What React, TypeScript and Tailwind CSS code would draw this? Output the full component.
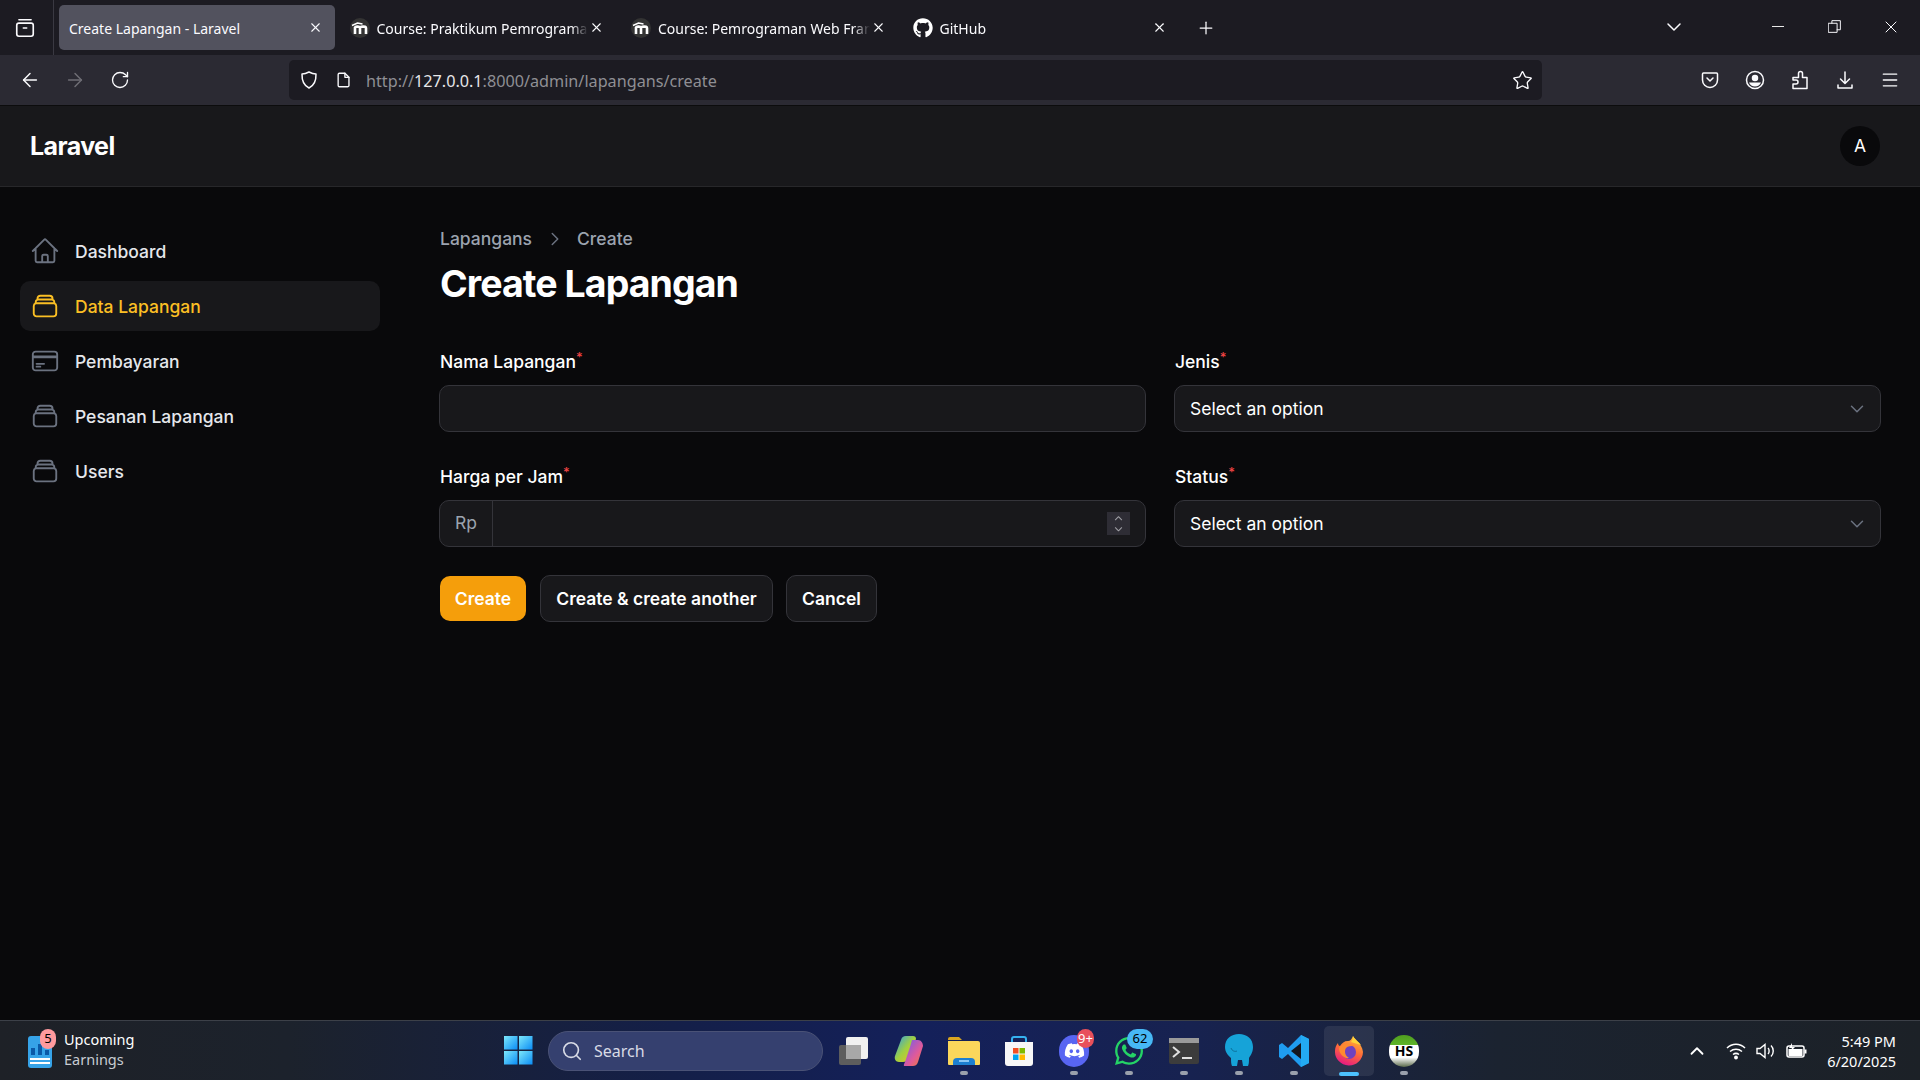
import React from "react";
import { HiOutlineHome, HiOutlineRectangleStack, HiOutlineCreditCard } from "react-icons/hi2";
import { FaGithub, FaDiscord, FaWhatsapp } from "react-icons/fa";
import { ChevronDown, ChevronUp, ChevronRight, X, Plus, Search, Star, ArrowLeft, ArrowRight, RotateCw, Menu } from "lucide-react";

const Svg = ({ size = 20, children, className = "" }: { size?: number; children: React.ReactNode; className?: string }) => (
  <svg width={size} height={size} viewBox="0 0 20 20" fill="none" stroke="currentColor" strokeWidth="1.5" strokeLinecap="round" strokeLinejoin="round" className={className}>
    {children}
  </svg>
);

const Moodle = () => (
  <svg width="20" height="20" viewBox="0 0 20 20" className="shrink-0">
    <circle cx="10" cy="10" r="10" fill="#333" />
    <path d="M2 7.500l5.500-2.500 5 1" fill="none" stroke="#fff" strokeWidth="1.400" />
    <path d="M5 16V9M10 16V10c0-1.800 6-2.300 6 0v6M5 10c0-1.800 5-2.300 5 0" fill="none" stroke="#fff" strokeWidth="2.600" />
  </svg>
);

function Tab({ title, icon, active }: { title: string; icon?: React.ReactNode; active?: boolean }) {
  return (
    <div className="h-[55px] w-[281.5px] shrink-0 px-[2px] py-[5px]">
      <div className={`flex h-[45px] items-center rounded-[5px] pl-[10px] ${active ? "mr-[2px] bg-[#52525e] pr-[12px]" : "pr-[14px]"}`}>
        {icon && <span className="-ml-[1px] mr-[7px] flex w-5 shrink-0 justify-center pt-[1px]">{icon}</span>}
        <span className={`min-w-0 flex-1 overflow-hidden whitespace-nowrap pt-[2px] text-[14px] text-[#fbfbfe] [font-family:'Noto_Sans',sans-serif] ${active ? "" : "[mask-image:linear-gradient(90deg,#000_92%,transparent)]"}`}>{title}</span>
        <X size={15} strokeWidth={1.7} className="ml-[1px] shrink-0 text-[#fbfbfe]" />
      </div>
    </div>
  );
}

function TabBar() {
  return (
    <div className="flex h-[55px] shrink-0 items-start bg-[#1c1b22]">
      <div className="flex h-[55px] w-[54px] shrink-0 items-center justify-center border-r border-[#3a3942] pr-[4px]">
        <Svg size={22} className="text-[#fbfbfe]">
          <path d="M4.500 2.500h11" />
          <rect x="2.500" y="5.500" width="15" height="12" rx="2" />
          <path d="M8.500 10h3" />
        </Svg>
      </div>
      <div className="w-[3px] shrink-0" />
      <Tab title="Create Lapangan - Laravel" active />
      <Tab title="Course: Praktikum Pemrograman" icon={<Moodle />} />
      <Tab title="Course: Pemrograman Web Framework" icon={<Moodle />} />
      <Tab title="GitHub" icon={<FaGithub size={20} className="text-white" />} />
      <div className="ml-[4px] flex h-[55px] w-[38px] shrink-0 items-center justify-center pt-[1px]">
        <Plus size={20} strokeWidth={1.5} className="text-[#fbfbfe]" />
      </div>
      <div className="flex h-[55px] flex-1 items-center justify-end pb-[2px] text-[#fbfbfe]">
        <ChevronDown size={24} strokeWidth={1.5} />
        <div className="w-[86px]" />
        <div className="h-px w-3 bg-[#e8e8e8]" />
        <div className="w-[44px]" />
        <Svg size={13}>
          <rect x="1" y="5" width="13" height="14" />
          <path d="M6 5V1h13v14h-5" />
        </Svg>
        <div className="w-[40px]" />
        <X size={20} strokeWidth={1.2} />
        <div className="w-[19px]" />
      </div>
    </div>
  );
}

function NavBar() {
  return (
    <div className="flex h-[51px] shrink-0 items-center border-b border-[#0c0c0d] bg-[#2b2a33] text-[#fbfbfe]">
      <div className="flex w-[289px] shrink-0 items-center pl-[19px]">
        <ArrowLeft size={22} strokeWidth={1.6} />
        <ArrowRight size={22} strokeWidth={1.6} className="ml-[23px] text-[#6f6e75]" />
        <RotateCw size={20} strokeWidth={1.6} className="ml-[24px]" />
      </div>
      <div className="flex h-10 w-[1253px] shrink-0 items-center rounded-[5px] bg-[#1c1b22] pl-[10px]">
        <Svg size={20}>
          <path d="M10 2c2.500 1.300 4.500 2 7 2 .2 6.500-1.800 11.500-7 14C4.800 15.500 2.800 10.500 3 4c2.500 0 4.500-.7 7-2z" />
        </Svg>
        <Svg size={18} className="ml-[16px]">
          <path d="M5 2.500h6l4.500 4.500v9a1.500 1.500 0 0 1-1.500 1.500H5A1.500 1.500 0 0 1 3.500 16V4A1.500 1.500 0 0 1 5 2.500z" />
          <path d="M11 2.500V7h4.500" />
        </Svg>
        <span className="ml-[13px] flex-1 whitespace-nowrap pt-[3px] text-[16.200px] text-[#8f8f94] [font-family:'Noto_Sans',sans-serif]">
          http://<span className="text-[#e6e6e8]">127.0.0.1</span>:8000/admin/lapangans/create
        </span>
        <Star size={21} strokeWidth={1.5} className="mr-[9px]" />
      </div>
      <div className="flex flex-1 items-center justify-end pr-[20px] gap-[25px]">
        <Svg size={20}>
          <path d="M3.500 3h13a1 1 0 0 1 1 1v6a7.500 7.500 0 0 1-15 0V4a1 1 0 0 1 1-1z" />
          <path d="M7 8l3 3 3-3" />
        </Svg>
        <Svg size={20}>
          <circle cx="10" cy="10" r="8.500" />
          <circle cx="10" cy="8" r="2.500" fill="currentColor" />
          <path d="M4 12.500h12a6.500 6.500 0 0 1-12 0z" fill="currentColor" stroke="none" />
        </Svg>
        <Svg size={20}>
          <path d="M3 18.500V14h3a2 2 0 0 0 0-4H3V7.500h5.500V3.500a2 2 0 0 1 4 0v4H17v11z" />
        </Svg>
        <Svg size={20}>
          <path d="M10 2v11M5.500 9l4.500 4.500L14.500 9" />
          <path d="M3 15v3h14v-3" />
        </Svg>
        <Menu size={20} strokeWidth={1.6} />
      </div>
    </div>
  );
}

const items = [
  { label: "Dashboard", Icon: HiOutlineHome },
  { label: "Data Lapangan", Icon: HiOutlineRectangleStack, active: true },
  { label: "Pembayaran", Icon: HiOutlineCreditCard },
  { label: "Pesanan Lapangan", Icon: HiOutlineRectangleStack },
  { label: "Users", Icon: HiOutlineRectangleStack },
];

function Sidebar() {
  return (
    <aside className="flex w-[400px] shrink-0 flex-col gap-[5px] pl-[20px] pr-[20px] pt-[39px]">
      {items.map(({ label, Icon, active }) => (
        <div key={label} className={`flex h-[50px] items-center gap-[15px] rounded-[10px] px-[10px] ${active ? "bg-[#18181b]" : ""}`}>
          <Icon size={30} className={active ? "text-[#fbbf24]" : "text-[#6b7280]"} />
          <span className={`text-[17.500px] font-medium leading-[25px] ${active ? "text-[#fbbf24]" : "text-[#e5e7eb]"}`}>{label}</span>
        </div>
      ))}
    </aside>
  );
}

const Label = ({ children }: { children: React.ReactNode }) => (
  <div className="mb-[11px] h-[25px] pl-[1px] text-[17.500px] font-medium leading-[25px] text-white">
    {children}
    <sup className="text-[13px] font-medium text-[#ef4444]">*</sup>
  </div>
);

const fieldBox = "h-[47px] rounded-[10px] border border-[#34343a] bg-[#18181b]";

const SelectBox = () => (
  <div className={`${fieldBox} flex items-center justify-between pl-[15px] pr-[12px]`}>
    <span className="text-[17.500px] leading-[25px] text-white">Select an option</span>
    <ChevronDown size={22} strokeWidth={1.6} className="text-[#6b7280]" />
  </div>
);

function Form() {
  return (
    <main className="min-w-0 flex-1 pl-[39px] pr-[39px] pt-[39px]">
      <div className="flex h-[25px] items-center pl-[1px] text-[17.500px] font-medium leading-[25px] text-[#9ca3af]">
        <span>Lapangans</span>
        <ChevronRight size={22} strokeWidth={1.6} className="ml-[12px] mr-[11px] text-[#6b7280]" />
        <span>Create</span>
      </div>
      <h1 className="mt-[10px] pl-[1px] text-[37.500px] font-bold leading-[45px] tracking-[-0.94px] text-white">Create Lapangan</h1>
      <div className="mt-[43px] grid grid-cols-2 gap-x-[28px] gap-y-[32px]">
        <div>
          <Label>Nama Lapangan</Label>
          <div className={fieldBox} />
        </div>
        <div>
          <Label>Jenis</Label>
          <SelectBox />
        </div>
        <div>
          <Label>Harga per Jam</Label>
          <div className={`${fieldBox} flex items-center`}>
            <div className="flex h-full w-[53px] items-center justify-center border-r border-[#34343a] text-[17.500px] text-[#9ca3af]">Rp</div>
            <div className="flex-1" />
            <div className="mr-[15px] flex h-[23px] w-[23px] flex-col items-center justify-center bg-[#2e2d35] text-[#a0a0a6]">
              <ChevronUp size={13} strokeWidth={2} className="-mb-[1px]" />
              <ChevronDown size={13} strokeWidth={2} className="-mt-[1px]" />
            </div>
          </div>
        </div>
        <div>
          <Label>Status</Label>
          <SelectBox />
        </div>
      </div>
      <div className="mt-[28px] flex items-center pl-[1px]">
        <button className="h-[45px] w-[86px] rounded-[10px] bg-[#f59e0b] pt-[2px] text-[17.500px] font-semibold text-white">Create</button>
        <button className="ml-[14px] h-[47px] w-[233px] rounded-[10px] border border-[#34343a] bg-[#18181b] pt-[2px] text-[17.500px] font-semibold text-white">Create &amp; create another</button>
        <button className="ml-[13px] h-[47px] w-[91px] rounded-[10px] border border-[#34343a] bg-[#18181b] pt-[2px] text-[17.500px] font-semibold text-white">Cancel</button>
      </div>
    </main>
  );
}

const Pin = ({ on, children, glow }: { on?: boolean; children: React.ReactNode; glow?: boolean }) => (
  <div className={`relative flex h-[50px] w-[50px] shrink-0 items-center justify-center rounded-[5px] ${glow ? "bg-[#ffffff14]" : ""}`}>
    {children}
    {on && <span className="absolute bottom-[1px] left-1/2 h-[4px] w-[8px] -translate-x-1/2 rounded-full bg-[#9aa0ac]" />}
    {glow && <span className="absolute bottom-0 left-1/2 h-[4px] w-[20px] -translate-x-1/2 rounded-full bg-[#4cc2ff]" />}
  </div>
);

const Badge = ({ children, className }: { children: React.ReactNode; className: string }) => (
  <span className={`absolute flex items-center justify-center rounded-full text-[13px] leading-none ${className}`}>{children}</span>
);

function Taskbar() {
  return (
    <footer className="flex h-[60px] shrink-0 items-center border-t border-[#3c4048] bg-[linear-gradient(90deg,#1e2127_0%,#1c222c_15%,#141f48_35%,#14205a_48%,#172250_62%,#1b2330_78%,#1c2127_100%)] [font-family:'Noto_Sans',sans-serif]">
      <div className="flex w-[492px] shrink-0 items-center pl-[28px]">
        <div className="relative h-[30px] w-[24px] shrink-0">
          <svg width="24" height="32" viewBox="0 0 24 32">
            <rect x="0" y="0" width="24" height="32" rx="3" fill="#36a3e8" />
            <rect x="3" y="12" width="4" height="7" fill="#0b5aa8" />
            <rect x="10" y="8" width="4" height="11" fill="#0b5aa8" />
            <rect x="17" y="14" width="4" height="5" fill="#0b5aa8" />
            <rect x="2" y="22" width="20" height="2" fill="#fff" />
            <rect x="2" y="26" width="20" height="2" fill="#fff" />
          </svg>
          <Badge className="left-[12px] -top-[7px] h-[20px] w-[16px] bg-[#ff9a9e] text-black">5</Badge>
        </div>
        <div className="mb-[4px] ml-[12px] flex flex-col text-[14.500px] leading-[20px]">
          <span className="text-white">Upcoming</span>
          <span className="text-[#c8ccd2]">Earnings</span>
        </div>
      </div>
      <div className="flex h-[50px] w-[52px] shrink-0 items-center justify-center">
        <svg width="29" height="29" viewBox="0 0 30 30">
          <defs>
            <linearGradient id="win" x1="0" y1="0" x2="1" y2="1">
              <stop offset="0" stopColor="#7de8fb" />
              <stop offset="1" stopColor="#0a8cf5" />
            </linearGradient>
          </defs>
          <rect x="0" y="0" width="14" height="14" fill="url(#win)" />
          <rect x="15.500" y="0" width="14" height="14" fill="url(#win)" />
          <rect x="0" y="15.500" width="14" height="14" fill="url(#win)" />
          <rect x="15.500" y="15.500" width="14" height="14" fill="url(#win)" />
        </svg>
      </div>
      <div className="ml-[4px] flex h-10 w-[275px] shrink-0 items-center rounded-full border border-[#4a5276] bg-[#35406f] pl-[12px] text-[#d8dbe6]">
        <Search size={22} strokeWidth={1.8} />
        <span className="ml-[11px] text-[16px]">Search</span>
      </div>
      <div className="ml-[6px] flex items-center gap-[5px]">
        <Pin>
          <svg width="30" height="30" viewBox="0 0 30 30" className="-ml-[2px]">
            <rect x="1" y="9" width="22" height="20" rx="2" fill="#5d5d5d" />
            <rect x="8" y="1" width="22" height="22" rx="2" fill="#f0f0f0" />
            <rect x="8" y="9" width="15" height="14" fill="#a8a8a8" />
          </svg>
        </Pin>
        <Pin>
          <svg width="30" height="32" viewBox="0 0 30 32">
            <defs>
              <linearGradient id="cp1" x1="0" y1="0" x2="1" y2="1">
                <stop offset="0" stopColor="#2a9cf0" />
                <stop offset="0.5" stopColor="#a0d040" />
                <stop offset="1" stopColor="#f0c020" />
              </linearGradient>
              <linearGradient id="cp2" x1="0" y1="0" x2="1" y2="1">
                <stop offset="0" stopColor="#6a5cf0" />
                <stop offset="0.6" stopColor="#e05a9a" />
                <stop offset="1" stopColor="#f08030" />
              </linearGradient>
            </defs>
            <path d="M12 1h7c2 0 3 1 3 3l-8 20c-1 2-2 3-5 3H5c-3 0-5-3-4-6L7 5c1-3 2-4 5-4z" fill="url(#cp1)" />
            <path d="M18 5h6c3 0 5 3 5 6l-5 16c-1 3-3 4-5 4h-8c-2 0-1-2 0-4l5-15z" fill="url(#cp2)" />
          </svg>
        </Pin>
        <Pin on>
          <svg width="32" height="30" viewBox="0 0 32 30">
            <path d="M0 3a2 2 0 0 1 2-2h9l3 3h-14z" fill="#d9a520" />
            <path d="M0 5h30a2 2 0 0 1 2 2v21a1 1 0 0 1-1 1H1a1 1 0 0 1-1-1z" fill="#fbd75b" />
            <path d="M5 26a4 4 0 0 1 4-4h14a4 4 0 0 1 4 4v3H5z" fill="#1d7fd1" />
            <rect x="11" y="24" width="10" height="2" fill="#8cc8f5" />
          </svg>
        </Pin>
        <Pin>
          <svg width="30" height="32" viewBox="0 0 30 32">
            <path d="M8 8V4a2 2 0 0 1 2-2h10a2 2 0 0 1 2 2v4" fill="none" stroke="#35b1f0" strokeWidth="2" />
            <path d="M1 7h28v21a3 3 0 0 1-3 3H4a3 3 0 0 1-3-3z" fill="#f7f7f7" />
            <rect x="9" y="13" width="5.500" height="5.500" fill="#f25022" />
            <rect x="15.500" y="13" width="5.500" height="5.500" fill="#7fba00" />
            <rect x="9" y="19.500" width="5.500" height="5.500" fill="#00a4ef" />
            <rect x="15.500" y="19.500" width="5.500" height="5.500" fill="#ffb900" />
          </svg>
        </Pin>
        <Pin on>
          <span className="flex h-[32px] w-[30px] items-center justify-center rounded-full bg-[#5865f2]">
            <FaDiscord size={21} className="text-white" />
          </span>
          <Badge className="right-[5px] top-[3px] h-[19px] w-[17px] bg-[#e8505b] text-white">9+</Badge>
        </Pin>
        <Pin on>
          <FaWhatsapp size={32} className="text-[#25d366]" />
          <Badge className="right-[1px] top-[3px] h-[20px] w-[26px] bg-[#47b8f5] text-black">62</Badge>
        </Pin>
        <Pin on>
          <svg width="30" height="26" viewBox="0 0 30 26">
            <rect x="0" y="0" width="30" height="26" rx="2" fill="#3c3c3c" />
            <rect x="0" y="0" width="30" height="5" fill="#9a9a9a" />
            <path d="M4 9l6 5-6 5" fill="none" stroke="#e0e0e0" strokeWidth="2" />
            <rect x="13" y="19" width="10" height="2" fill="#e0e0e0" />
          </svg>
        </Pin>
        <Pin on>
          <svg width="28" height="33" viewBox="0 0 28 33">
            <path d="M14 0c8 0 14 5 14 13 0 6-3 9-4 11 0 3 0 6-1 8h-5l-1-6h-4l-1 6H7c-1-2-1-5-1-8-2-2-6-5-6-11C0 5 6 0 14 0z" fill="#16a3d8" />
            <path d="M6 14c1 3 4 4 6 3" fill="none" stroke="#0b6f99" strokeWidth="1" />
          </svg>
        </Pin>
        <Pin on>
          <svg width="30" height="32" viewBox="0 0 30 32">
            <path d="M22 0l8 4v24l-8 4L9 19l-6 5-3-2V10l3-2 6 5z" fill="#1f9cf0" />
            <path d="M22 8v16l-10-8z" fill="#14161f" />
            <path d="M22 0l8 4v24l-8 4z" fill="#23aaf2" />
          </svg>
        </Pin>
        <Pin glow>
          <svg width="28" height="30" viewBox="0 0 28 30">
            <defs>
              <linearGradient id="ff" x1="0.700" y1="0" x2="0.300" y2="1">
                <stop offset="0" stopColor="#ffbd3a" />
                <stop offset="0.5" stopColor="#ff6a39" />
                <stop offset="1" stopColor="#e31587" />
              </linearGradient>
            </defs>
            <path d="M18 0c1 3 9 7 10 16a14 14 0 1 1-28-1c0-3 1-6 3-8 0 2 1 3 2 3 2-3 4-5 8-5 2 0 4-2 5-5z" fill="url(#ff)" />
            <path d="M18 0c1 3 5 5 8 9-3-1-7-2-10-3 1-2 2-3 2-6z" fill="#ffd43a" />
            <circle cx="14" cy="16" r="7" fill="#7042c0" />
            <path d="M4 12c3-5 11-6 15-2-3 0-6 0-8 2-2 3-1 8 3 10-5 1-10-4-10-10z" fill="#ff8a30" />
          </svg>
        </Pin>
        <Pin on>
          <span className="flex h-[32px] w-[30px] items-center justify-center overflow-hidden rounded-full bg-[linear-gradient(180deg,#4f9e1f_0%,#5fb52a_32%,#ffffff_32%,#ffffff_70%,#5a6a4a_100%)]">
            <span className="text-[14px] font-bold leading-[14px] text-black">HS</span>
          </span>
        </Pin>
      </div>
      <div className="flex flex-1 items-center justify-end pr-[24px] text-white">
        <ChevronUp size={22} strokeWidth={2} />
        <svg width="20" height="18" viewBox="0 0 20 18" fill="none" stroke="currentColor" strokeWidth="1.500" className="ml-[18px]">
          <path d="M1 6c5-5 13-5 18 0M4 9.500c3.500-3 8.500-3 12 0M7 12.500c2-1.500 4-1.500 6 0" />
          <circle cx="10" cy="15.500" r="1.200" fill="currentColor" />
        </svg>
        <svg width="20" height="18" viewBox="0 0 20 18" fill="none" stroke="currentColor" strokeWidth="1.400" className="ml-[10px]">
          <path d="M1 6.500h3l5-4v13l-5-4H1zM12 6c1.500 1.500 1.500 4.500 0 6M15 3.500c3 3 3 8 0 11" />
        </svg>
        <svg width="21" height="16" viewBox="0 0 21 16" className="ml-[10px]">
          <rect x="1" y="3" width="17" height="11" rx="2" fill="none" stroke="currentColor" strokeWidth="1.500" />
          <rect x="2.500" y="6" width="14" height="7" fill="currentColor" />
          <rect x="18.500" y="6.500" width="2" height="4" fill="currentColor" />
          <path d="M6 0L3 5h3L4 9l5-5H6z" fill="currentColor" />
        </svg>
        <div className="ml-[20px] flex flex-col items-end text-[14.500px] leading-[20px] text-white">
          <span>5:49 PM</span>
          <span>6/20/2025</span>
        </div>
      </div>
    </footer>
  );
}

export default function App() {
  return (
    <div className="flex h-screen w-full flex-col overflow-hidden bg-[#09090b] [font-family:Inter,sans-serif]">
      <TabBar />
      <NavBar />
      <header className="flex h-[81px] shrink-0 items-center justify-between border-b border-[#27272a] bg-[#18181b] pl-[30px] pr-[40px]">
        <span className="pt-[1px] text-[25px] font-bold tracking-[-0.6px] text-white">Laravel</span>
        <span className="flex h-10 w-10 items-center justify-center rounded-full bg-[#09090b] text-[17.500px] text-white">A</span>
      </header>
      <div className="flex min-h-0 flex-1">
        <Sidebar />
        <Form />
      </div>
      <Taskbar />
    </div>
  );
}
